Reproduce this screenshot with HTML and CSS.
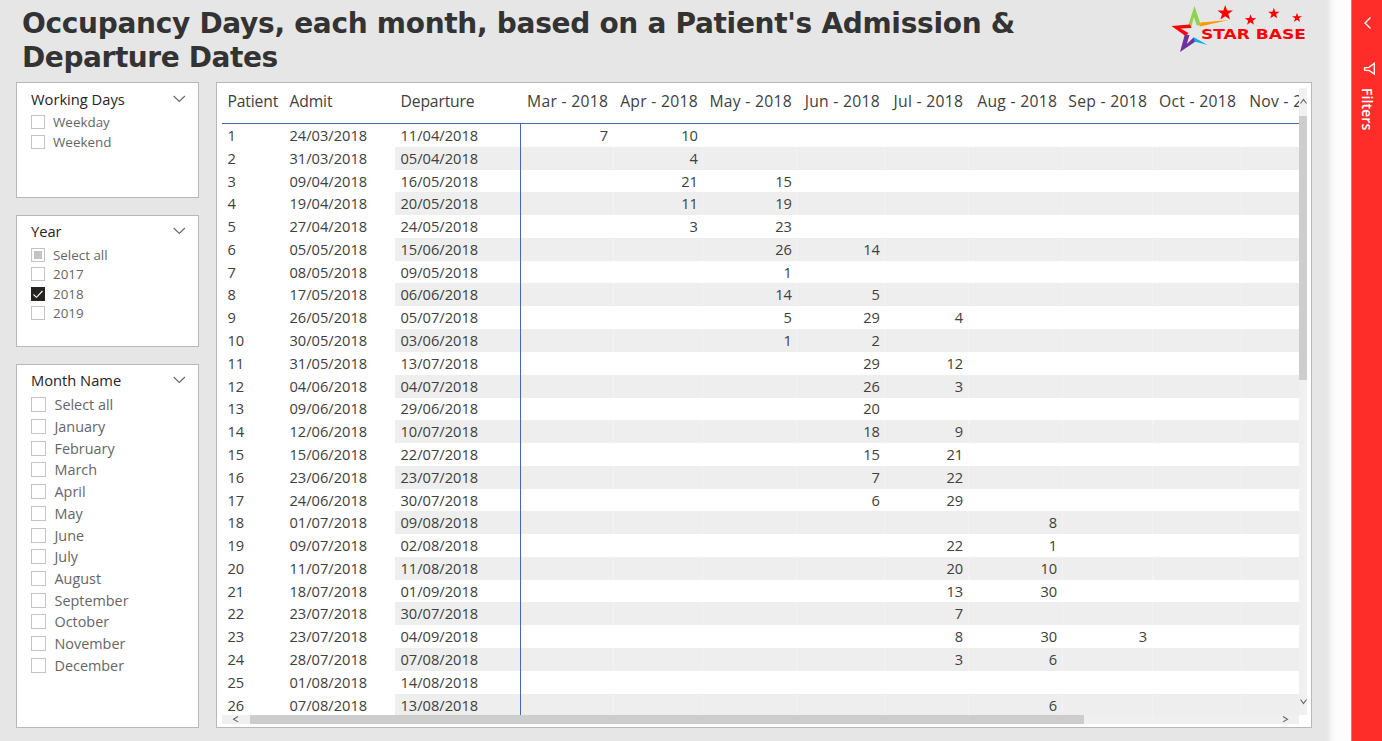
FILE: index.html
```html
<!DOCTYPE html>
<html lang="en">
<head>
<meta charset="utf-8">
<title>Occupancy Days</title>
<link rel="stylesheet" href="styles.css">
</head>
<body>
<div class="app">
  <main class="report">
    <header class="top">
      <h1 class="title"><span class="t1">Occupancy Days, each month, based on a Patient's Admission &amp;</span><br><span class="t2">Departure Dates</span></h1>
      <svg class="logo" width="140" height="56" viewBox="1170 0 140 56">
        <path fill="#92d050" d="M1194.500 6 L1200.800 25 L1196.800 25.500 L1193.800 17 L1191.500 26.500 L1188 26 Z"/>
        <path fill="#ff0000" d="M1171.500 26 L1190 24.500 L1191.500 28 L1180.500 28.500 L1188.500 33 L1185.500 36 Z"/>
        <path fill="#7030a0" d="M1184.800 34.500 L1189.500 35 L1186.800 44 L1193.500 37.500 L1195.500 41.500 L1180 52 Z"/>
        <path fill="#00b0f0" d="M1193.500 37 L1207.500 45 L1194.500 41.500 Z"/>
        <path fill="#ff9900" d="M1200.500 22.500 L1229 20 L1199.500 26.500 Z"/>
        <g fill="#ff0000">
          <path id="star" d="M1225.200 5 L1227.100 10.400 L1233 10.500 L1228.300 13.900 L1230 19.500 L1225.200 16.200 L1220.400 19.500 L1222.100 13.900 L1217.400 10.500 L1223.300 10.400 Z"/>
          <use href="#star" transform="translate(1250.500 19.800) scale(.73) translate(-1225.200 -12.700)"/>
          <use href="#star" transform="translate(1273.800 13.400) scale(.73) translate(-1225.200 -12.700)"/>
          <use href="#star" transform="translate(1297 17.600) scale(.64) translate(-1225.200 -12.700)"/>
          <text class="brand" x="1201" y="38.500" textLength="105" lengthAdjust="spacingAndGlyphs">STAR BASE</text>
        </g>
      </svg>
    </header>
    <div class="body">
      <aside class="slicers">
        <section class="slicer s-days">
          <div class="head"><span>Working Days</span><svg width="13" height="8" viewBox="0 0 13 8"><path d="M.7 1 L6.300 6.500 L11.900 1"/></svg></div>
          <div class="opt"><i class="box"></i>Weekday</div>
          <div class="opt"><i class="box"></i>Weekend</div>
        </section>
        <section class="slicer s-year">
          <div class="head"><span>Year</span><svg width="13" height="8" viewBox="0 0 13 8"><path d="M.7 1 L6.300 6.500 L11.900 1"/></svg></div>
          <div class="opt"><i class="box partial"></i>Select all</div>
          <div class="opt"><i class="box"></i>2017</div>
          <div class="opt"><i class="box checked"><svg width="12" height="12" viewBox="0 0 12 12"><path d="M1.500 6.500 L4.500 9.300 L10.500 3"/></svg></i>2018</div>
          <div class="opt"><i class="box"></i>2019</div>
        </section>
        <section class="slicer s-month">
          <div class="head"><span>Month Name</span><svg width="13" height="8" viewBox="0 0 13 8"><path d="M.7 1 L6.300 6.500 L11.900 1"/></svg></div>
          <div class="opt"><i class="box"></i>Select all</div>
          <div class="opt"><i class="box"></i>January</div>
          <div class="opt"><i class="box"></i>February</div>
          <div class="opt"><i class="box"></i>March</div>
          <div class="opt"><i class="box"></i>April</div>
          <div class="opt"><i class="box"></i>May</div>
          <div class="opt"><i class="box"></i>June</div>
          <div class="opt"><i class="box"></i>July</div>
          <div class="opt"><i class="box"></i>August</div>
          <div class="opt"><i class="box"></i>September</div>
          <div class="opt"><i class="box"></i>October</div>
          <div class="opt"><i class="box"></i>November</div>
          <div class="opt"><i class="box"></i>December</div>
        </section>
      </aside>
      <section class="matrix">
        <div class="view">
          <div class="row hdr"><b>Patient</b><b>Admit</b><b>Departure</b><b>Mar - 2018</b><b>Apr - 2018</b><b>May - 2018</b><b>Jun - 2018</b><b>Jul - 2018</b><b>Aug - 2018</b><b>Sep - 2018</b><b>Oct - 2018</b><b>Nov - 2018</b></div>
          <div class="rows" id="rows"></div>
        </div>
        <div class="vbar">
          <svg width="8" height="28" viewBox="0 0 8 28"><path d="M1.500 15.500 L4.500 11.500 L7.500 15.500"/></svg>
          <div class="vthumb"></div>
          <svg class="down" width="8" height="28" viewBox="0 0 8 28"><path d="M1.500 12.500 L4.500 16.500 L7.500 12.500"/></svg>
        </div>
        <div class="hbar">
          <svg width="28" height="9" viewBox="0 0 28 9"><path d="M16 1.500 L11.500 4.200 L16 6.900"/></svg>
          <div class="hthumb"></div>
          <svg class="right" width="28" height="9" viewBox="0 0 28 9"><path d="M12 1.500 L16.500 4.200 L12 6.900"/></svg>
        </div>
      </section>
    </div>
  </main>
  <div class="edge"></div>
  <aside class="filters">
    <svg class="chev" width="10" height="14" viewBox="0 0 10 14"><path d="M7.500 1.500 L2 7 L7.500 12.500"/></svg>
    <svg class="funnel" width="13" height="14" viewBox="0 0 13 14"><path d="M11.300 1.300 V12 L6 8.500 L1.500 8.200 V5.800 L6 5.300 Z"/></svg>
    <span class="flabel">Filters</span>
  </aside>
</div>
<script src="rows.js"></script>
</body>
</html>
```
FILE: rows.js
```js
// patient | admit | departure | days by month, Mar to Nov
const data = `24/03 11/04 7,10
31/03 05/04 ,4
09/04 16/05 ,21,15
19/04 20/05 ,11,19
27/04 24/05 ,3,23
05/05 15/06 ,,26,14
08/05 09/05 ,,1
17/05 06/06 ,,14,5
26/05 05/07 ,,5,29,4
30/05 03/06 ,,1,2
31/05 13/07 ,,,29,12
04/06 04/07 ,,,26,3
09/06 29/06 ,,,20
12/06 10/07 ,,,18,9
15/06 22/07 ,,,15,21
23/06 23/07 ,,,7,22
24/06 30/07 ,,,6,29
01/07 09/08 ,,,,,8
09/07 02/08 ,,,,22,1
11/07 11/08 ,,,,20,10
18/07 01/09 ,,,,13,30
23/07 30/07 ,,,,7
23/07 04/09 ,,,,8,30,3
28/07 07/08 ,,,,3,6
01/08 14/08 
07/08 13/08 ,,,,,6`;

document.getElementById('rows').innerHTML = data.split('\n').map((line, n) => {
  const [admit, departure, days] = line.split(' ');
  const months = (days || '').split(',');
  const cells = [n + 1, admit + '/2018', departure + '/2018'];
  for (let m = 0; m < 9; m++) cells.push(months[m] || '');
  return '<div class="row">' + cells.map(c => `<span>${c}</span>`).join('') + '</div>';
}).join('');
```
FILE: styles.css
```css
* { box-sizing: border-box; }
body { margin: 0; font-family: "Open Sans", "Noto Sans", sans-serif; color: #404040; }
.app { display: flex; width: 1382px; height: 741px; overflow: hidden; background: #fff; }
.report { width: 1325px; height: 741px; background: #e6e6e6; padding: 0 0 0 16px; }
.edge { width: 26px; background: linear-gradient(90deg, #e6e6e6 0, #e9e9e9 3px, #f8f8f8 7px, #fdfdfd 11px, #fff 100%); }
.top { display: flex; height: 82px; justify-content: space-between; }
.title { margin: 0; padding: 7px 0 0 6px; font: bold 28px/33.500px "DejaVu Sans", sans-serif; letter-spacing: -.3px; color: #333; white-space: nowrap; }
.t2 { letter-spacing: -.42px; }
.logo { margin-right: 15px; display: block; }
.brand { font: bold 14.500px "DejaVu Sans", sans-serif; }
.body { display: flex; gap: 17px; }
.slicers { width: 183px; display: flex; flex-direction: column; gap: 16.500px; }
.slicer { background: #fff; border: 1px solid #b8b8b8; padding: 4px 12.500px 0 14px; }
.s-days { height: 116px; }
.s-year { height: 132.500px; }
.s-month { height: 364.500px; }
.head { display: flex; align-items: center; justify-content: space-between; height: 23px; margin-bottom: 2.400px; font-size: 14.700px; color: #252423; }
.head svg, .chev, .funnel, .vbar svg, .hbar svg { fill: none; stroke: #666; stroke-width: 1.100; }
.opt { display: flex; align-items: center; height: 19.600px; font-size: 13.400px; color: #666; }
.box { width: 14px; height: 14px; margin-right: 8px; border: 1px solid #c4c4c4; display: grid; place-items: center; }
.partial::after { content: ""; width: 8px; height: 8px; background: #c4c4c4; }
.checked { background: #252423; border-color: #252423; }
.checked svg { fill: none; stroke: #fff; stroke-width: 1.100; }
.s-month .opt { height: 21.720px; font-size: 14.400px; }
.s-month .box { width: 15px; height: 15px; margin-right: 8.500px; }
.matrix { width: 1096px; height: 646px; background: #fff; border: 1px solid #b8b8b8; padding: 5px; display: grid; grid-template: 626.500px 9.500px / 1077px 8px; }
.view { overflow: hidden; }
.row { display: grid; grid-template-columns: 62px 111px 126px 92.700px 89.800px 94px 88px 83.200px 94px 90px 89px 94px; height: 22.790px; width: 1113.700px; font-size: 14.650px; line-height: 23px; }
.row > * { padding: 0 5.500px; white-space: nowrap; font-weight: 400; }
.row > :nth-child(n+4) { text-align: right; }
.row > :nth-child(-n+3) { padding: 0 0 0 5.500px; }
.hdr { height: 36px; font-size: 15.700px; line-height: 26px; border-bottom: 1px solid #4468b8; letter-spacing: -.15px; }
.hdr > :nth-child(n+4) { letter-spacing: .28px; }
.rows .row > :nth-child(3) { border-right: 1px solid #4468b8; }
.rows .row:nth-child(even) > :nth-child(n+3) { background: #eee; }
.rows .row:nth-child(even) > :nth-child(n+4) { border-right: 1px solid #f3f3f3; padding-right: 4.500px; }
.vbar { background: #f0f0f0; display: flex; flex-direction: column; }
.vthumb { height: 264px; background: #cdcdcd; }
.vbar .down { margin-top: auto; }
.hbar { background: #f0f0f0; display: flex; }
.hthumb { width: 834px; background: #cdcdcd; }
.hbar .right { margin-left: auto; }
.filters { width: 31px; background: #ff2d2a; border-left: 1px solid #b88; display: flex; flex-direction: column; align-items: center; padding: 16px 2px 0 4px; color: #fff; }
.filters svg { stroke: #fff; stroke-width: 1.300; }
.funnel { margin-top: 32px; margin-left: 3px; }
.flabel { writing-mode: vertical-rl; font-weight: 600; font-size: 14.200px; line-height: 18px; margin-top: 12px; margin-right: 2px; }
```
